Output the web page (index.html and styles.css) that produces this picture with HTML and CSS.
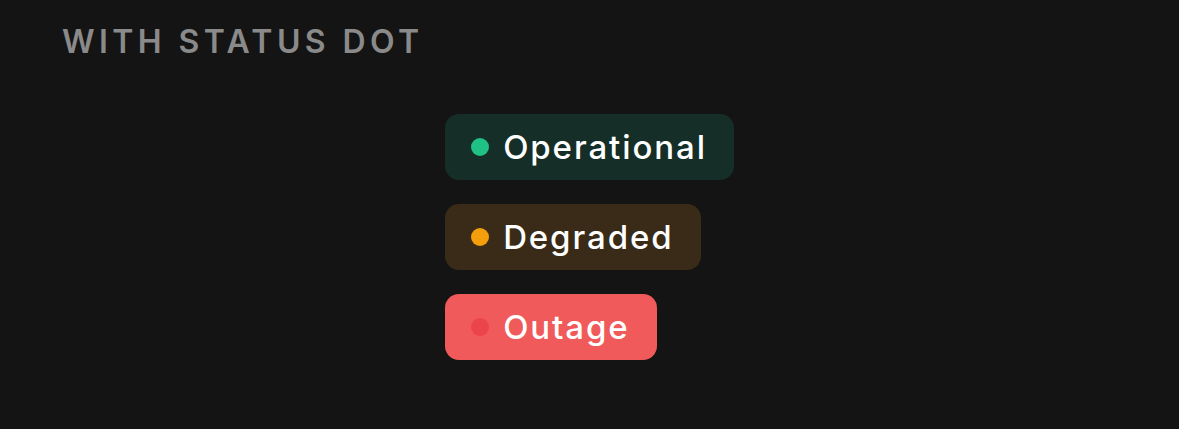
FILE: index.html
```html
<!DOCTYPE html>
<html lang="en">
<head>
<meta charset="utf-8">
<link rel="stylesheet" href="styles.css">
</head>
<body>
<main class="page">
  <h2 class="section-title">WITH STATUS DOT</h2>
  <div class="stage">
    <div class="badges">
      <span class="badge badge-ok"><span class="dot"></span>Operational</span>
      <span class="badge badge-warn"><span class="dot"></span>Degraded</span>
      <span class="badge badge-err"><span class="dot"></span>Outage</span>
    </div>
  </div>
</main>
</body>
</html>
```
FILE: styles.css
```css
* { box-sizing: border-box; }
html, body { margin: 0; padding: 0; }
body {
  background: #141414;
  width: 1179px;
  height: 429px;
  overflow: hidden;
  font-family: Inter, "Noto Sans", sans-serif;
}
.page {
  padding: 24px 60px 0 62px;
}
.section-title {
  margin: 0;
  color: #8a8a8a;
  font-size: 32px;
  font-weight: 600;
  letter-spacing: 4.4px;
  line-height: 36px;
}
.stage {
  display: flex;
  justify-content: center;
  margin-left: -62px;
  margin-right: -60px;
  padding-top: 54px;
}
.badges {
  display: flex;
  flex-direction: column;
  align-items: flex-start;
  gap: 24px;
}
.badge {
  display: inline-flex;
  align-items: center;
  gap: 14px;
  height: 66px;
  padding: 0 27px 0 26px;
  border-radius: 14px;
  color: #ffffff;
  font-size: 33px;
  font-weight: 500;
  letter-spacing: 1.9px;
}
.dot {
  width: 18px;
  height: 18px;
  border-radius: 50%;
  flex: none;
}
.badge-ok { background: #152e27; }
.badge-ok .dot { background: #1fc185; }
.badge-warn { background: #392b17; }
.badge-warn .dot { background: #f59e0b; }
.badge-err { background: #f05a5a; }
.badge-err .dot { background: #ec444b; }
```
